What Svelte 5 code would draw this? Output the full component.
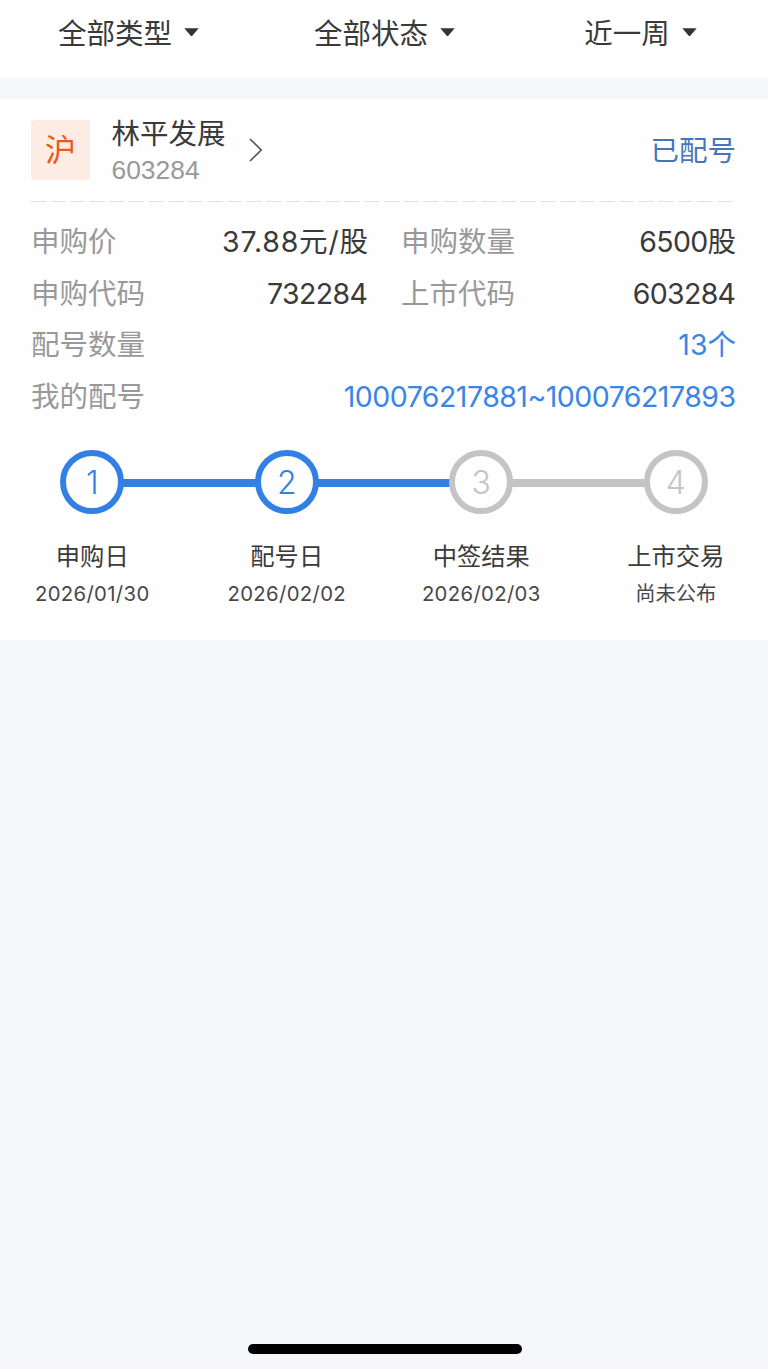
<script>
  const filters = ['全部类型', '全部状态', '近一周'];

  const stock = {
    market: '沪',
    name: '林平发展',
    code: '603284',
    status: '已配号',
  };

  // tracking: letter spacing of the value, in px
  const details = [
    { label: '申购价', value: '37.88元/股', tracking: 0.8 },
    { label: '申购数量', value: '6500股', tracking: -0.7 },
    { label: '申购代码', value: '732284', tracking: -0.6 },
    { label: '上市代码', value: '603284', tracking: -0.7 },
    { label: '配号数量', value: '13个', tracking: 0, wide: true },
    { label: '我的配号', value: '100076217881~100076217893', tracking: -0.52, wide: true },
  ];

  const steps = [
    { title: '申购日', date: '2026/01/30', done: true },
    { title: '配号日', date: '2026/02/02', done: true },
    { title: '中签结果', date: '2026/02/03', done: false },
    { title: '上市交易', date: '尚未公布', done: false },
  ];
</script>

<div class="page">
  <nav class="filters">
    {#each filters as filter}
      <div class="filter">
        <span>{filter}</span>
        <svg class="caret" width="15" height="9" viewBox="0 0 15 9">
          <path d="M0.3 0.3H14.7L8.3 7.7Q7.5 8.5 6.7 7.7Z" fill="#333" />
        </svg>
      </div>
    {/each}
  </nav>

  <section class="card">
    <header class="stock">
      <div class="market">{stock.market}</div>
      <div class="names">
        <div class="name">{stock.name}</div>
        <div class="code">{stock.code}</div>
      </div>
      <svg class="arrow" width="14" height="24" viewBox="0 0 14 24">
        <path d="M1 1L12.2 12L1 23" fill="none" stroke="#555" stroke-width="1.7" />
      </svg>
      <div class="status">{stock.status}</div>
    </header>

    <svg class="divider" width="702" height="2">
      <line x1="0" y1="0.5" x2="702" y2="0.5" stroke="#e0e0e0" stroke-width="1" stroke-dasharray="15.2 4.4" />
    </svg>

    <div class="details">
      {#each details as item}
        <div class="detail" class:wide={item.wide}>
          <span class="label">{item.label}</span>
          <span class="value" style="letter-spacing: {item.tracking}px; margin-right: {-item.tracking}px">{item.value}</span>
        </div>
      {/each}
    </div>

    <div class="steps">
      {#each steps as step, i}
        <div class="step" class:done={step.done}>
          <div class="track">
            <span class="line" class:hidden={i === 0} class:blue={i > 0 && steps[i - 1].done}></span>
            <span class="circle">{i + 1}</span>
            <span class="line" class:hidden={i === steps.length - 1} class:blue={step.done}></span>
          </div>
          <div class="title">{step.title}</div>
          <div class="date">{step.date}</div>
        </div>
      {/each}
    </div>
  </section>

  <div class="home-bar"></div>
</div>

<style>
  :global(body) {
    margin: 0;
    background: #fff;
  }

  .page {
    display: flex;
    flex-direction: column;
    box-sizing: border-box;
    width: 768px;
    height: 1369px;
    background: #f6f7fa;
    color: #3a3a3a;
    font-family: Inter, "Noto Sans CJK SC", sans-serif;
    font-size: 28.5px;
    overflow: hidden;
  }

  .filters {
    display: grid;
    grid-template-columns: repeat(3, 1fr);
    height: 78px;
    background: #fff;
  }

  .filter {
    display: flex;
    justify-content: center;
    align-items: center;
    gap: 12px;
    height: 62px;
    padding-left: 1px;
  }

  .caret {
    margin-top: 3px;
  }

  .card {
    box-sizing: border-box;
    height: 541px;
    margin-top: 21px;
    padding: 0 32px 0 31px;
    background: #fefefe;
  }

  .stock {
    display: flex;
    align-items: center;
    height: 102px;
  }

  .market {
    width: 59px;
    height: 60px;
    border-radius: 4px;
    background: #fcece4;
    color: #ea5a14;
    font-size: 31px;
    line-height: 60px;
    text-align: center;
  }

  .names {
    padding-top: 3px;
    margin-left: 21.5px;
  }

  .name {
    line-height: 38px;
  }

  .code {
    color: #999;
    font-family: "Liberation Sans", sans-serif;
    font-size: 26.4px;
    line-height: 35px;
  }

  .arrow {
    margin-left: 23px;
  }

  .status {
    margin: 0 0 4px auto;
    color: #4577b8;
  }

  .divider {
    display: block;
  }

  .details {
    display: grid;
    grid-template-columns: 337px 334px;
    column-gap: 34px;
    padding-top: 13px;
  }

  .detail {
    display: flex;
    justify-content: space-between;
    height: 51.6px;
    line-height: 51.6px;
    white-space: nowrap;
  }

  .wide {
    grid-column: 1 / -1;
  }

  .label {
    color: #999;
  }

  .detail:not(.wide):nth-child(even) .label {
    margin-left: -1px;
  }

  .wide .value {
    color: #3a85e8;
  }

  .steps {
    display: grid;
    grid-template-columns: repeat(4, 1fr);
    margin: 28px -37px 0 -36px;
  }

  .step {
    text-align: center;
  }

  .track {
    display: flex;
    align-items: center;
    height: 64px;
  }

  .line {
    flex: 1;
    height: 8px;
    margin: 2px -1px 0;
    background: #c4c4c4;
  }

  .line.blue {
    background: #3380e4;
  }

  .line.hidden {
    visibility: hidden;
  }

  .circle {
    box-sizing: border-box;
    width: 64px;
    height: 64px;
    border: 6px solid #c4c4c4;
    border-radius: 50%;
    color: #c4c4c4;
    font-size: 32px;
    font-weight: 300;
    line-height: 53px;
  }

  .done .circle {
    border-color: #3380e4;
    color: #3380e4;
  }

  .title {
    margin-top: 24px;
    font-size: 24.3px;
    line-height: 37px;
  }

  .date {
    color: #484848;
    font-size: 20.3px;
    line-height: 38px;
  }

  .done .date,
  .step:nth-child(3) .date {
    letter-spacing: 0.35px;
  }

  .home-bar {
    width: 274px;
    height: 10px;
    margin: auto auto 15px 248px;
    border-radius: 5px;
    background: #000;
  }
</style>
